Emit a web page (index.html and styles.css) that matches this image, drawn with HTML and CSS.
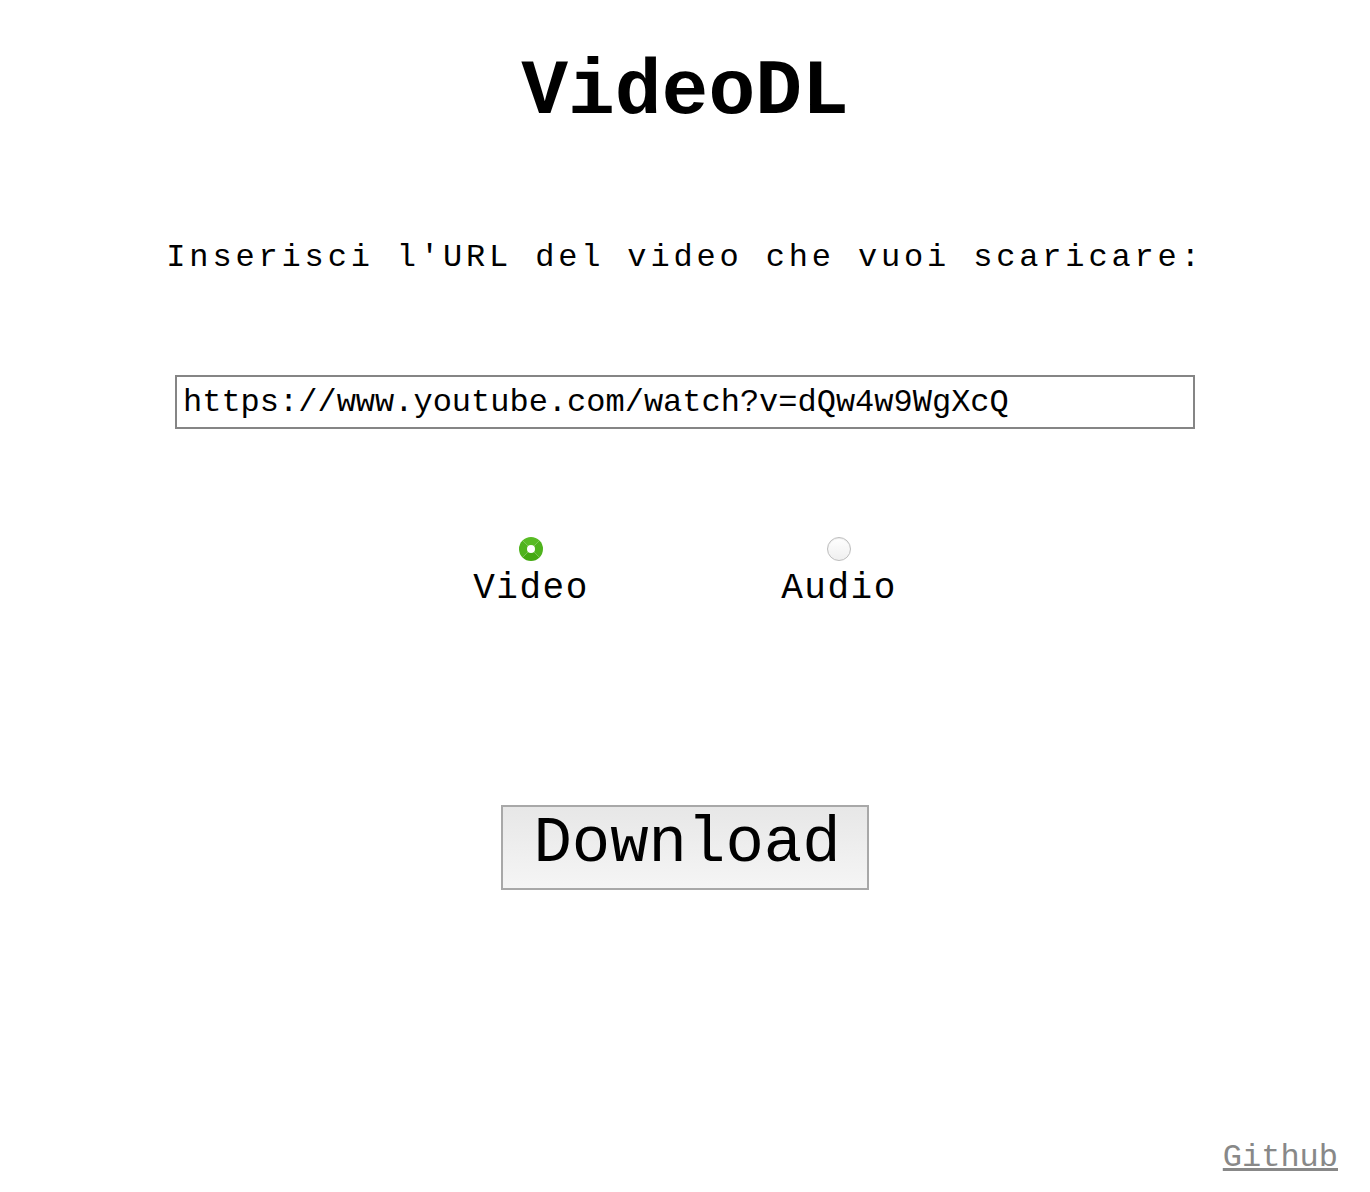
FILE: index.html
```html
<!DOCTYPE html>
<html lang="it">
<head>
<meta charset="utf-8">
<title>VideoDL</title>
<link rel="stylesheet" href="styles.css">
</head>
<body>
<main class="main">
  <h1 class="title">VideoDL</h1>
  <p class="prompt">Inserisci l'URL del video che vuoi scaricare:</p>
  <input class="url" type="text" value="https://www.youtube.com/watch?v=dQw4w9WgXcQ">
  <div class="options">
    <label class="option">
      <input class="radio" type="radio" name="fmt" checked>
      <span class="option-text">Video</span>
    </label>
    <label class="option">
      <input class="radio" type="radio" name="fmt">
      <span class="option-text">Audio</span>
    </label>
  </div>
  <button class="download" type="button">Download</button>
</main>
<footer class="footer">
  <a class="github" href="#">Github</a>
</footer>
</body>
</html>
```

FILE: styles.css
```css
html, body {
  margin: 0;
  padding: 0;
}

body {
  min-height: 100vh;
  display: flex;
  flex-direction: column;
  background: #ffffff;
  color: #000000;
  font-family: "Liberation Mono", "Courier New", monospace;
}

.main {
  display: flex;
  flex-direction: column;
  align-items: center;
  text-align: center;
}

.title {
  margin: 52px 0 0;
  font-size: 78px;
  line-height: 80px;
  font-weight: bold;
}

.prompt {
  margin: 110px 0 0;
  font-size: 32px;
  line-height: 32px;
  letter-spacing: 3.85px;
  font-weight: normal;
}

.url {
  margin: 101px 0 0;
  box-sizing: border-box;
  width: 1020px;
  height: 54px;
  padding: 0 6px;
  border: 2px solid #858585;
  border-radius: 0;
  font-family: inherit;
  font-size: 32px;
  color: #000;
  background: #fff;
  outline: none;
}

.options {
  margin-top: 108px;
  display: flex;
  justify-content: center;
  gap: 108px;
}

.option {
  width: 200px;
  display: flex;
  flex-direction: column;
  align-items: center;
  gap: 10px;
  cursor: pointer;
}

.radio {
  -webkit-appearance: none;
  appearance: none;
  margin: 0;
  width: 24px;
  height: 24px;
  border-radius: 50%;
  box-sizing: border-box;
  border: 1px solid #bdbdbd;
  background: linear-gradient(#ffffff, #efefef);
  box-shadow: inset 0 1px 1px rgba(0,0,0,0.08);
}

.radio:checked {
  border: 8px solid #4fb31d;
  border-color: #58bb24 #4fb31d #44a912 #4fb31d;
  background: #ffffff;
  box-shadow: none;
}

.option-text {
  font-size: 36px;
  line-height: 36px;
  letter-spacing: 1.5px;
}

.download {
  margin-top: 198px;
  box-sizing: border-box;
  height: 85px;
  padding: 0 26px 6px 30px;
  border: 2px solid #a8a8a8;
  border-radius: 0;
  background: linear-gradient(#e7e7e7, #f5f5f5);
  font-family: inherit;
  font-size: 64px;
  line-height: 75px;
  color: #000;
}

.footer {
  margin-top: auto;
  display: flex;
  justify-content: flex-end;
  padding: 0 32px 18px 0;
}

.github {
  font-size: 32px;
  line-height: 32px;
  color: #888888;
  text-decoration: underline;
}
```
